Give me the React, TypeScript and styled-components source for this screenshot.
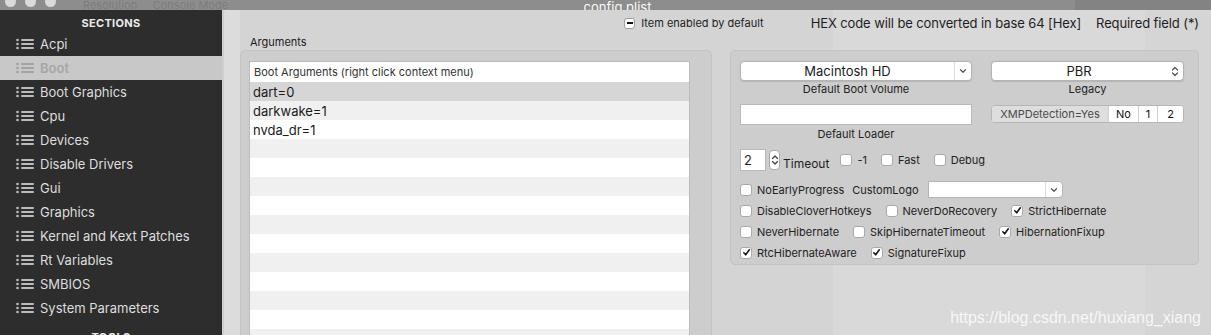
import React from "react"
import styled, { createGlobalStyle } from "styled-components"

const GlobalStyle = createGlobalStyle`
  html, body {
    margin: 0;
    padding: 0;
    background: #d6d6d6;
  }
  body {
    font-family: "Inter", "Roboto", "Noto Sans", sans-serif;
    color: #1e1e1e;
  }
  * {
    box-sizing: border-box;
  }
`

const Window = styled.div`
  position: relative;
  width: 1211px;
  height: 335px;
  overflow: hidden;
  display: flex;
  flex-direction: column;
`

const TitleBar = styled.div`
  height: 10px;
  flex: none;
  display: grid;
  grid-template-columns: 1fr auto 1fr;
  align-items: end;
  background: linear-gradient(to right, #8d8d8d 0, #8d8d8d 1075px, #838383 1075px);
  overflow: hidden;
`

const Lights = styled.div`
  display: flex;
  align-items: flex-start;
  gap: 9px;
  padding-left: 5px;
  align-self: start;
  margin-top: -4px;
`

const Light = styled.span`
  width: 11px;
  height: 11px;
  border-radius: 50%;
  background: #dadada;
`

const FadedMenu = styled.span`
  margin-left: 18px;
  margin-top: 2px;
  font-size: 11px;
  color: rgba(60, 60, 60, 0.22);
  white-space: nowrap;
`

const TitleText = styled.div`
  font-size: 13px;
  line-height: 14px;
  color: #fafafa;
  padding-left: 24px;
`

const Body = styled.div`
  flex: 1;
  display: flex;
  min-height: 0;
`

const Sidebar = styled.nav`
  width: 224px;
  flex: none;
  background: #2d2d2d;
  border-right: 2px solid #cfcfcf;
  display: flex;
  flex-direction: column;
`

const SideHeader = styled.div<{ $top?: number }>`
  height: 22px;
  flex: none;
  padding-top: ${(p) => p.$top ?? 6}px;
  text-align: center;
  font-size: 11px;
  line-height: 14px;
  font-weight: 700;
  letter-spacing: 0.3px;
  color: #ececec;
`

const NavItem = styled.div<{ $active?: boolean }>`
  height: 24px;
  flex: none;
  display: flex;
  align-items: center;
  gap: 6px;
  padding-left: 16px;
  font-size: 13px;
  background: ${(p) => (p.$active ? "#c8c8c8" : "transparent")};
  color: ${(p) => (p.$active ? "#a6a6a6" : "#dedede")};
  font-weight: ${(p) => (p.$active ? 600 : 400)};
`

const Main = styled.main`
  flex: 1;
  display: flex;
  flex-direction: column;
  padding: 0 12px 0 16px;
  background: linear-gradient(
    to right,
    #dcdcdc 0,
    #dcdcdc 16px,
    #d4d4d4 16px,
    #d4d4d4 609px,
    #d9d9d9 609px,
    #d9d9d9 921px,
    #d5d5d5 921px
  );
`

const TopBar = styled.div`
  height: 25px;
  flex: none;
  display: flex;
  align-items: center;
  justify-content: flex-end;
  padding-top: 1px;
`

const EnabledItem = styled.div`
  display: flex;
  align-items: center;
  gap: 6px;
  font-size: 11px;
  margin-right: 47px;
`

const MinusBox = styled.span`
  width: 11px;
  height: 11px;
  border-radius: 3px;
  background: #fff;
  border: 1px solid #9c9c9c;
  display: flex;
  align-items: center;
  justify-content: center;
  &::after {
    content: "";
    width: 6px;
    height: 2px;
    background: #111;
  }
`

const Notice = styled.span`
  font-size: 13px;
  letter-spacing: -0.1px;
  & + & {
    margin-left: 15px;
  }
`

const Content = styled.div`
  flex: 1;
  display: flex;
  gap: 18px;
  align-items: flex-start;
`

const LeftColumn = styled.div`
  width: 472px;
  flex: none;
  display: flex;
  flex-direction: column;
`

const GroupLabel = styled.div`
  height: 15px;
  font-size: 11px;
  line-height: 14px;
  padding-left: 10px;
`

const GroupBox = styled.div`
  background: #cdcdcd;
  border: 1px solid #c3c3c3;
  border-radius: 5px;
`

const ArgsBox = styled(GroupBox)`
  padding: 10px 21px 0 8px;
  height: 300px;
`

const Table = styled.div`
  border: 1px solid #bcbcbc;
  border-bottom: none;
  background: #fff;
`

const TableHeader = styled.div`
  height: 20px;
  display: flex;
  align-items: center;
  padding-left: 4px;
  font-size: 11px;
  color: #333;
  background: #fff;
`

const TableRow = styled.div<{ $tone: "selected" | "odd" | "even" }>`
  height: 19px;
  display: flex;
  align-items: center;
  padding-left: 3px;
  font-size: 13px;
  color: #1a1a1a;
  background: ${(p) =>
    p.$tone === "selected" ? "#d6d6d6" : p.$tone === "odd" ? "#f0f0f0" : "#ffffff"};
`

const OptionsBox = styled(GroupBox)`
  flex: 1;
  margin-top: 15px;
  padding: 10px 14px 1px 9px;
  display: flex;
  flex-direction: column;
`

const FieldGrid = styled.div`
  display: grid;
  grid-template-columns: 232px 193px;
  column-gap: 19px;
  row-gap: 8px;
`

const Field = styled.div`
  display: flex;
  flex-direction: column;
`

const FieldCaption = styled.div<{ $gap?: number }>`
  margin-top: ${(p) => p.$gap ?? 1}px;
  text-align: center;
  font-size: 11px;
  line-height: 14px;
  color: #222;
`

const Popup = styled.div`
  height: 20px;
  display: flex;
  background: #fff;
  border: 1px solid #b4b4b4;
  border-radius: 4px;
  box-shadow: 0 0.5px 1px rgba(0, 0, 0, 0.12);
`

const PopupValue = styled.span`
  flex: 1;
  text-align: center;
  font-size: 13px;
  line-height: 18px;
  color: #1b1b1b;
`

const PopupArrow = styled.span<{ $divided?: boolean }>`
  width: 17px;
  display: flex;
  align-items: center;
  justify-content: center;
  border-left: ${(p) => (p.$divided ? "1px solid #dcdcdc" : "none")};
  color: #555;
`

const TextField = styled.div`
  height: 21px;
  background: #fff;
  border: 1px solid #b9b9b9;
`

const Segmented = styled.div`
  height: 18px;
  margin-top: 1px;
  display: flex;
  border: 1px solid #b6b6b6;
  border-radius: 4px;
  overflow: hidden;
  background: #fff;
`

const Segment = styled.span<{ $selected?: boolean; $w: number }>`
  width: ${(p) => p.$w}px;
  flex: none;
  display: flex;
  align-items: center;
  justify-content: center;
  font-size: 11px;
  background: ${(p) => (p.$selected ? "#dedede" : "#fff")};
  color: ${(p) => (p.$selected ? "#4a4a4a" : "#111")};
  & + & {
    border-left: 1px solid #cfcfcf;
  }
  &:last-child {
    flex: 1;
  }
`

const TimeoutRow = styled.div`
  margin-top: 8px;
  height: 22px;
  display: flex;
  align-items: center;
`

const NumberField = styled.div`
  width: 26px;
  height: 22px;
  padding-left: 3px;
  background: #fff;
  border: 1px solid #b9b9b9;
  font-size: 13px;
  line-height: 20px;
`

const Stepper = styled.div`
  width: 11px;
  height: 20px;
  margin-left: 3px;
  background: #fff;
  border: 1px solid #aaa;
  border-radius: 4px;
  display: flex;
  align-items: center;
  justify-content: center;
  color: #444;
`

const TimeoutLabel = styled.span`
  font-size: 12px;
  margin: 6px 11px 0 3px;
`

const CheckRow = styled.div<{ $first?: boolean }>`
  height: 21px;
  margin-top: ${(p) => (p.$first ? 8 : 0)}px;
  display: flex;
  align-items: center;
  gap: 14px;
`

const InlineChecks = styled.div`
  display: flex;
  align-items: center;
  gap: 14px;
`

const CheckItem = styled.label`
  display: flex;
  align-items: center;
  gap: 5px;
  font-size: 11px;
  color: #222;
  white-space: nowrap;
`

const Box = styled.span`
  width: 12px;
  height: 12px;
  flex: none;
  background: #fff;
  border: 1px solid #a9a9a9;
  border-radius: 3px;
  display: flex;
  align-items: center;
  justify-content: center;
`

const InlineLabel = styled.span`
  font-size: 11px;
  color: #222;
  margin-left: -6px;
`

const Combo = styled.div`
  width: 135px;
  height: 17px;
  display: flex;
  background: #fff;
  border: 1px solid #b4b4b4;
  border-radius: 0 4px 4px 0;
  margin-left: -4px;
`

const Watermark = styled.div`
  position: absolute;
  right: 10px;
  bottom: 8px;
  font-family: "Liberation Sans", Arial, sans-serif;
  font-size: 16px;
  color: rgba(255, 255, 255, 0.82);
  pointer-events: none;
`

const ListIcon = ({ color }: { color: string }) => (
  <svg width="18" height="12" viewBox="0 0 18 12">
    {[2, 6, 10].map((y) => (
      <g key={y}>
        <circle cx="1.5" cy={y} r="1.3" fill={color} />
        <line x1="6" y1={y} x2="17" y2={y} stroke={color} strokeWidth="2" strokeLinecap="round" />
      </g>
    ))}
  </svg>
)

const ChevronDown = () => (
  <svg width="8" height="6" viewBox="0 0 8 6">
    <path d="M1.5 1.8 L4 4.2 L6.5 1.8" fill="none" stroke="currentColor" strokeWidth="1.3" strokeLinecap="round" strokeLinejoin="round" />
  </svg>
)

const ChevronUpDown = ({ h = 11 }: { h?: number }) => (
  <svg width="8" height={h} viewBox="0 0 8 11">
    <path d="M1.5 4 L4 1.5 L6.5 4 M1.5 7 L4 9.5 L6.5 7" fill="none" stroke="currentColor" strokeWidth="1.3" strokeLinecap="round" strokeLinejoin="round" />
  </svg>
)

const Tick = () => (
  <svg width="9" height="9" viewBox="0 0 9 9">
    <path d="M1.8 4.8 L3.7 6.8 L7.3 1.8" fill="none" stroke="#1a1a1a" strokeWidth="1.6" strokeLinecap="round" strokeLinejoin="round" />
  </svg>
)

const Check = ({ label, checked }: { label?: string; checked?: boolean }) => (
  <CheckItem>
    <Box>{checked && <Tick />}</Box>
    {label}
  </CheckItem>
)

const sections = [
  "Acpi",
  "Boot",
  "Boot Graphics",
  "Cpu",
  "Devices",
  "Disable Drivers",
  "Gui",
  "Graphics",
  "Kernel and Kext Patches",
  "Rt Variables",
  "SMBIOS",
  "System Parameters",
]

const bootArgs = ["dart=0", "darkwake=1", "nvda_dr=1"]

const checkRows = [
  [
    { label: "DisableCloverHotkeys" },
    { label: "NeverDoRecovery" },
    { label: "StrictHibernate", checked: true },
  ],
  [
    { label: "NeverHibernate" },
    { label: "SkipHibernateTimeout" },
    { label: "HibernationFixup", checked: true },
  ],
  [
    { label: "RtcHibernateAware", checked: true },
    { label: "SignatureFixup", checked: true },
  ],
]

const App = () => {
  const rows = Array.from({ length: 14 }, (_, i) => bootArgs[i] ?? "")

  return (
    <Window>
      <GlobalStyle />
      <TitleBar>
        <Lights>
          <Light />
          <Light />
          <Light />
          <FadedMenu>Resolution &nbsp;&nbsp;&nbsp; Console Mode</FadedMenu>
        </Lights>
        <TitleText>config.plist</TitleText>
        <div />
      </TitleBar>
      <Body>
        <Sidebar>
          <SideHeader>SECTIONS</SideHeader>
          {sections.map((s) => (
            <NavItem key={s} $active={s === "Boot"}>
              <ListIcon color={s === "Boot" ? "#a2a2a2" : "#bcbcbc"} />
              {s}
            </NavItem>
          ))}
          <SideHeader $top={10}>TOOLS</SideHeader>
        </Sidebar>
        <Main>
          <TopBar>
            <EnabledItem>
              <MinusBox />
              Item enabled by default
            </EnabledItem>
            <Notice>HEX code will be converted in base 64 [Hex]</Notice>
            <Notice>Required field (*)</Notice>
          </TopBar>
          <Content>
            <LeftColumn>
              <GroupLabel>Arguments</GroupLabel>
              <ArgsBox>
                <Table>
                  <TableHeader>Boot Arguments (right click context menu)</TableHeader>
                  {rows.map((r, i) => (
                    <TableRow key={i} $tone={i === 0 ? "selected" : i % 2 ? "odd" : "even"}>
                      {r}
                    </TableRow>
                  ))}
                </Table>
              </ArgsBox>
            </LeftColumn>
            <OptionsBox>
              <FieldGrid>
                <Field>
                  <Popup>
                    <PopupValue>Macintosh HD</PopupValue>
                    <PopupArrow $divided>
                      <ChevronDown />
                    </PopupArrow>
                  </Popup>
                  <FieldCaption>Default Boot Volume</FieldCaption>
                </Field>
                <Field>
                  <Popup>
                    <PopupValue>PBR</PopupValue>
                    <PopupArrow>
                      <ChevronUpDown />
                    </PopupArrow>
                  </Popup>
                  <FieldCaption>Legacy</FieldCaption>
                </Field>
                <Field>
                  <TextField />
                  <FieldCaption $gap={2}>Default Loader</FieldCaption>
                </Field>
                <Field>
                  <Segmented>
                    <Segment $selected $w={116}>
                      XMPDetection=Yes
                    </Segment>
                    <Segment $w={30}>No</Segment>
                    <Segment $w={19}>1</Segment>
                    <Segment $w={26}>2</Segment>
                  </Segmented>
                </Field>
              </FieldGrid>
              <TimeoutRow>
                <NumberField>2</NumberField>
                <Stepper>
                  <ChevronUpDown h={14} />
                </Stepper>
                <TimeoutLabel>Timeout</TimeoutLabel>
                <InlineChecks>
                  <Check label="-1" />
                  <Check label="Fast" />
                  <Check label="Debug" />
                </InlineChecks>
              </TimeoutRow>
              <CheckRow $first>
                <Check label="NoEarlyProgress" />
                <InlineLabel>CustomLogo</InlineLabel>
                <Combo>
                  <PopupValue />
                  <PopupArrow $divided>
                    <ChevronDown />
                  </PopupArrow>
                </Combo>
              </CheckRow>
              {checkRows.map((row, i) => (
                <CheckRow key={i}>
                  {row.map((c) => (
                    <Check key={c.label} label={c.label} checked={c.checked} />
                  ))}
                </CheckRow>
              ))}
            </OptionsBox>
          </Content>
        </Main>
      </Body>
      <Watermark>https://blog.csdn.net/huxiang_xiang</Watermark>
    </Window>
  )
}

export default App
